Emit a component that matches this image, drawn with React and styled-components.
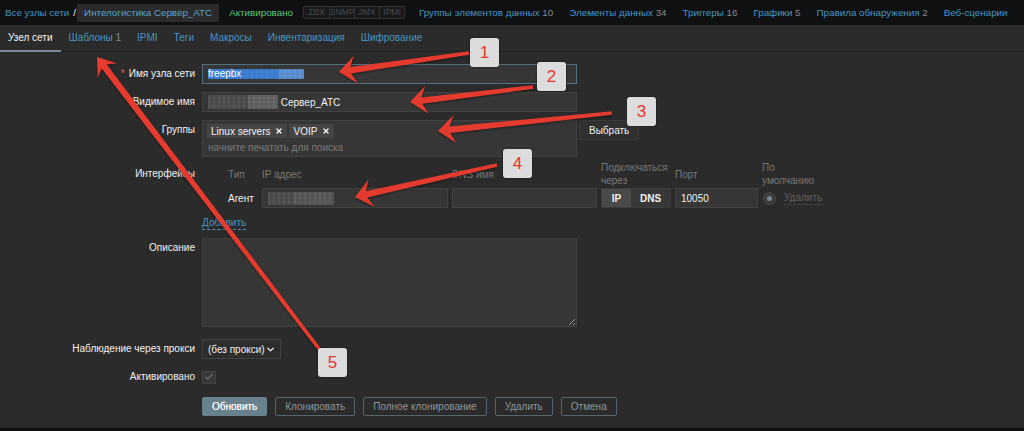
import React from "react";
import styled, { createGlobalStyle } from "styled-components";
import { X, ChevronDown, Check } from "lucide-react";

const GlobalStyle = createGlobalStyle`
  html, body { margin: 0; padding: 0; background: #0e1012; }
  body {
    font-family: "Liberation Sans", Arial, sans-serif;
    font-size: 10px;
    color: #f2f2f2;
  }
  * { box-sizing: border-box; }
`;

const Page = styled.div`
  position: relative;
  width: 1024px;
  height: 431px;
  overflow: hidden;
  background: #0e1012;
`;

/* ---------- header ---------- */

const TopBar = styled.header`
  height: 25px;
  display: flex;
  align-items: center;
  padding-left: 5px;
  white-space: nowrap;
  font-size: 9.8px;
`;

const Link = styled.a`
  color: #4796c4;
  text-decoration: none;
`;

const Slash = styled.span`
  margin: 0 0 0 4px;
  color: #f2f2f2;
`;

const CrumbBox = styled.span`
  display: inline-flex;
  align-items: center;
  height: 18px;
  padding: 0 7px;
  margin-left: 1px;
  background: #2b2b2b;
  color: #5aa3cf;
`;

const Status = styled.span`
  margin-left: 10px;
  color: #59c96f;
`;

const Avail = styled.span`
  display: inline-flex;
  margin-left: 10px;
  border: 1px solid #2f3133;
  border-radius: 2px;
  background: #17191b;
`;

const AvailItem = styled.span`
  width: 25px;
  height: 11px;
  line-height: 11px;
  font-size: 8.5px;
  text-align: center;
  color: #4a4c4e;
  border-left: ${({ $first }) => ($first ? "none" : "1px solid #2f3133")};
`;

const NavLink = styled(Link)`
  margin-left: ${({ $first }) => ($first ? "14px" : "16px")};
`;

const Count = styled.span`
  color: #8a8a8a;
`;

/* ---------- panel ---------- */

const Panel = styled.main`
  height: 403px;
  background: #2b2b2b;
`;

const TabBar = styled.nav`
  display: flex;
  height: 27px;
  border-bottom: 1px solid #232323;
`;

const Tab = styled.a`
  padding: 0 8px;
  line-height: 25px;
  height: 27px;
  color: ${({ $active }) => ($active ? "#f2f2f2" : "#4796c4")};
  border-bottom: 2px solid ${({ $active }) => ($active ? "#768d99" : "transparent")};
  text-decoration: none;
`;

const Form = styled.form`
  display: flex;
  flex-direction: column;
  gap: 8px;
  padding-top: 12px;
`;

const Row = styled.div`
  display: grid;
  grid-template-columns: 195px auto;
  column-gap: 7px;
  margin-top: ${({ $mt }) => $mt || 0}px;
`;

const Label = styled.label`
  text-align: right;
  line-height: 20px;
  padding-top: ${({ $pt }) => $pt || 0}px;
  color: #f2f2f2;
`;

const Asterisk = styled.span`
  color: #e45959;
  margin-right: 4px;
`;

const Field = styled.div`
  display: flex;
  align-items: ${({ $top }) => ($top ? "flex-start" : "center")};
  flex-direction: ${({ $column }) => ($column ? "column" : "row")};
`;

const Input = styled.div`
  width: ${({ $w }) => $w || 375}px;
  height: 20px;
  display: flex;
  align-items: center;
  padding: 0 5px;
  background: #363636;
  border: 1px solid ${({ $focus }) => ($focus ? "#51707f" : "#414141")};
  color: #f2f2f2;
  white-space: nowrap;
  overflow: hidden;
`;

const Selected = styled.span`
  display: inline-flex;
  align-items: center;
  height: 10px;
  line-height: 10px;
  background: #3a7fd3;
  color: #fff;
`;

const Blur = styled.span`
  display: inline-block;
  width: ${({ $w }) => $w}px;
  height: ${({ $h }) => $h || 14}px;
  background:
    repeating-linear-gradient(90deg, rgba(255,255,255,0.05) 0 2px, transparent 2px 5px),
    repeating-linear-gradient(0deg, rgba(0,0,0,0.06) 0 2px, transparent 2px 4px),
    ${({ $bg }) => $bg || "#5a5a5a"};
`;

const MultiSelect = styled.div`
  width: 375px;
  height: 37px;
  padding: 3px 4px;
  background: #363636;
  border: 1px solid #414141;
`;

const Chips = styled.div`
  display: flex;
  gap: 2px;
`;

const Chip = styled.span`
  display: inline-flex;
  align-items: center;
  gap: 5px;
  height: 14px;
  padding: 0 4px;
  background: #454545;
  color: #f2f2f2;
`;

const Placeholder = styled.div`
  margin-top: 4px;
  padding-left: 1px;
  color: #7b7b7b;
`;

const AltButton = styled.button`
  height: 20px;
  margin-left: 2px;
  padding: 0 9px;
  font: inherit;
  background: #303030;
  border: 1px solid #3a3a3a;
  border-radius: 2px;
  color: #f2f2f2;
`;

/* ---------- interfaces ---------- */

const IfaceGrid = styled.div`
  display: grid;
  grid-template-columns: 22px 30px 186px 145px 70px 83px auto;
  grid-template-rows: 28px 20px;
  column-gap: 4px;
  align-items: center;
`;

const Head = styled.div`
  color: #787878;
  line-height: 13px;
  white-space: nowrap;
`;

const Cell = styled.div`
  display: flex;
  align-items: center;
  white-space: nowrap;
`;

const Toggle = styled.div`
  display: flex;
  width: 70px;
  height: 20px;
  border: 1px solid #3c3c3c;
`;

const ToggleItem = styled.span`
  display: flex;
  align-items: center;
  justify-content: center;
  width: ${({ $w }) => $w}px;
  font-weight: bold;
  background: ${({ $on }) => ($on ? "#4a4a4a" : "#383838")};
  color: #f2f2f2;
`;

const Radio = styled.span`
  display: inline-flex;
  align-items: center;
  justify-content: center;
  width: 13px;
  height: 13px;
  margin-left: 1px;
  border-radius: 50%;
  background: #3a3a3a;
  border: 1px solid #4a4a4a;
  &::after {
    content: "";
    width: 5px;
    height: 5px;
    border-radius: 50%;
    background: #768d99;
  }
`;

const Muted = styled.span`
  margin-left: 8px;
  color: #5f5f5f;
  border-bottom: 1px dotted #4f4f4f;
  line-height: 12px;
`;

const AddLink = styled.a`
  margin-top: 8px;
  line-height: 13px;
  color: #4796c4;
  border-bottom: 1px dashed #4796c4;
  text-decoration: none;
`;

const TextArea = styled.textarea`
  width: 375px;
  height: 89px;
  margin: 0;
  background: #363636;
  border: 1px solid #414141;
  color: #f2f2f2;
  font: inherit;
`;

const Select = styled.div`
  display: flex;
  align-items: center;
  justify-content: space-between;
  width: 79px;
  height: 20px;
  padding: 0 4px 0 5px;
  background: #2d2d2d;
  border: 1px solid #414141;
  color: #f2f2f2;
`;

const CheckBox = styled.span`
  display: inline-flex;
  align-items: center;
  justify-content: center;
  width: 14px;
  height: 13px;
  background: #383838;
  border: 1px solid #444;
`;

const Buttons = styled.div`
  display: flex;
  gap: 8px;
`;

const Button = styled.button`
  height: 19px;
  padding: 0 9px;
  font: inherit;
  border-radius: 2px;
  border: 1px solid ${({ $primary }) => ($primary ? "#69808d" : "#56646c")};
  background: ${({ $primary }) => ($primary ? "#69808d" : "transparent")};
  color: ${({ $primary }) => ($primary ? "#f6f6f6" : "#8e979c")};
  text-shadow: ${({ $primary }) => ($primary ? "0 0 0.6px #fff" : "none")};
`;

/* ---------- annotations ---------- */

const Overlay = styled.svg`
  position: absolute;
  left: 0;
  top: 0;
  pointer-events: none;
  filter: drop-shadow(0 1px 1px rgba(0, 0, 0, 0.45));
`;

const Marker = styled.div`
  position: absolute;
  width: 29px;
  height: 29px;
  display: flex;
  align-items: center;
  justify-content: center;
  background: #dcdcdc;
  border-radius: 3px;
  box-shadow: 0 0 2px rgba(0, 0, 0, 0.6);
  color: #e5352b;
  font-size: 17px;
`;

const arrows = [
  { from: [469, 53], to: [339, 72], head: 17, half: 14 },
  { from: [533, 87], to: [410, 102], head: 17, half: 14 },
  { from: [612, 113], to: [438, 131], head: 17, half: 14 },
  { from: [497, 165], to: [355, 197], head: 17, half: 14 },
  { from: [320, 350], to: [97, 57], head: 17, half: 12 },
];

const markers = [
  { n: 1, x: 470, y: 38 },
  { n: 2, x: 537, y: 62 },
  { n: 3, x: 627, y: 97 },
  { n: 4, x: 503, y: 149 },
  { n: 5, x: 318, y: 348 },
];

function arrowPoints({ from, to, head, half }) {
  const dx = to[0] - from[0];
  const dy = to[1] - from[1];
  const len = Math.hypot(dx, dy);
  const ux = dx / len;
  const uy = dy / len;
  const nx = -uy;
  const ny = ux;
  const w0 = 1.8;
  const w1 = 3.2;
  const bx = to[0] - ux * head;
  const by = to[1] - uy * head;
  const kx = to[0] - ux * head * 0.7;
  const ky = to[1] - uy * head * 0.7;
  const pts = [
    [from[0] + nx * w0, from[1] + ny * w0],
    [kx + nx * w1, ky + ny * w1],
    [bx + nx * half, by + ny * half],
    to,
    [bx - nx * half, by - ny * half],
    [kx - nx * w1, ky - ny * w1],
    [from[0] - nx * w0, from[1] - ny * w0],
  ];
  return pts.map((p) => p.map((v) => v.toFixed(1)).join(",")).join(" ");
}

const navItems = [
  ["Группы элементов данных", "10"],
  ["Элементы данных", "34"],
  ["Триггеры", "16"],
  ["Графики", "5"],
  ["Правила обнаружения", "2"],
  ["Веб-сценарии", ""],
];

const tabs = [
  ["Узел сети", ""],
  ["Шаблоны", "1"],
  ["IPMI", ""],
  ["Теги", ""],
  ["Макросы", ""],
  ["Инвентаризация", ""],
  ["Шифрование", ""],
];

export default function App() {
  return (
    <Page>
      <GlobalStyle />
      <TopBar>
        <Link>Все узлы сети</Link>
        <Slash>/</Slash>
        <CrumbBox>Интелогистика Сервер_АТС</CrumbBox>
        <Status>Активировано</Status>
        <Avail>
          {["ZBX", "SNMP", "JMX", "IPMI"].map((t, i) => (
            <AvailItem key={t} $first={i === 0}>{t}</AvailItem>
          ))}
        </Avail>
        {navItems.map(([t, c], i) => (
          <NavLink key={t} $first={i === 0}>
            {t}
            {c && <Count> {c}</Count>}
          </NavLink>
        ))}
      </TopBar>

      <Panel>
        <TabBar>
          {tabs.map(([t, c], i) => (
            <Tab key={t} $active={i === 0}>
              {t}
              {c && <Count> {c}</Count>}
            </Tab>
          ))}
        </TabBar>

        <Form>
          <Row>
            <Label><Asterisk>*</Asterisk>Имя узла сети</Label>
            <Field>
              <Input $focus>
                <Selected>
                  freepbx
                  <Blur $w={38} $h={10} $bg="#3a7fd3" />
                  <Blur $w={25} $h={10} $bg="#5b8fd6" />
                </Selected>
              </Input>
            </Field>
          </Row>

          <Row>
            <Label>Видимое имя</Label>
            <Field>
              <Input>
                <Blur $w={40} $bg="#4d4d4d" />
                <Blur $w={30} $bg="#626262" />
                <span>&nbsp;Сервер_АТС</span>
              </Input>
            </Field>
          </Row>

          <Row>
            <Label>Группы</Label>
            <Field $top>
              <MultiSelect>
                <Chips>
                  <Chip>Linux servers <X size={8} strokeWidth={4} /></Chip>
                  <Chip>VOIP <X size={8} strokeWidth={4} /></Chip>
                </Chips>
                <Placeholder>начните печатать для поиска</Placeholder>
              </MultiSelect>
              <AltButton type="button">Выбрать</AltButton>
            </Field>
          </Row>

          <Row $mt={-5}>
            <Label $pt={4}>Интерфейсы</Label>
            <Field $column $top>
              <IfaceGrid>
                <span />
                <Head>Тип</Head>
                <Head>IP адрес</Head>
                <Head>DNS имя</Head>
                <Head>Подключаться<br />через</Head>
                <Head>Порт</Head>
                <Head>По<br />умолчанию</Head>

                <span />
                <Cell>Агент</Cell>
                <Input $w={186}>
                  <Blur $w={26} $h={13} $bg="#4c4c4c" />
                  <Blur $w={40} $h={13} $bg="#575757" />
                </Input>
                <Input $w={145} />
                <Toggle>
                  <ToggleItem $w={29} $on>IP</ToggleItem>
                  <ToggleItem $w={39}>DNS</ToggleItem>
                </Toggle>
                <Input $w={83}>10050</Input>
                <Cell>
                  <Radio />
                  <Muted>Удалить</Muted>
                </Cell>
              </IfaceGrid>
              <AddLink>Добавить</AddLink>
            </Field>
          </Row>

          <Row>
            <Label>Описание</Label>
            <Field $top>
              <TextArea />
            </Field>
          </Row>

          <Row $mt={4}>
            <Label>Наблюдение через прокси</Label>
            <Field>
              <Select>
                (без прокси)
                <ChevronDown size={11} strokeWidth={3} />
              </Select>
            </Field>
          </Row>

          <Row>
            <Label>Активировано</Label>
            <Field>
              <CheckBox>
                <Check size={10} strokeWidth={3} color="#6f6f6f" />
              </CheckBox>
            </Field>
          </Row>

          <Row $mt={2}>
            <span />
            <Buttons>
              <Button $primary type="button">Обновить</Button>
              <Button type="button">Клонировать</Button>
              <Button type="button">Полное клонирование</Button>
              <Button type="button">Удалить</Button>
              <Button type="button">Отмена</Button>
            </Buttons>
          </Row>
        </Form>
      </Panel>

      <Overlay width="1024" height="431" viewBox="0 0 1024 431">
        {arrows.map((a, i) => (
          <polygon key={i} points={arrowPoints(a)} fill="#e53b2e" />
        ))}
      </Overlay>
      {markers.map((m) => (
        <Marker key={m.n} style={{ left: m.x, top: m.y }}>{m.n}</Marker>
      ))}
    </Page>
  );
}
